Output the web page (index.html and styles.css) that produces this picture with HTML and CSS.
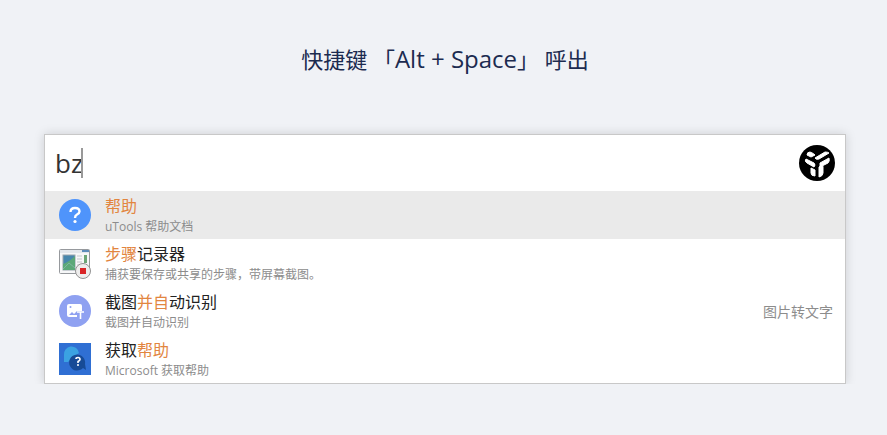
FILE: index.html
```html
<!DOCTYPE html>
<html lang="zh-CN">
<head>
    <meta charset="UTF-8">
    <title>uTools</title>
    <link rel="stylesheet" href="styles.css">
</head>
<body>
<h1 class="title">快捷键 「<span class="key">Alt + Space</span>」 呼出</h1>
<div class="box">
    <div class="search">
        <input class="keyword" type="text" value="bz" aria-label="搜索" autocomplete="off" spellcheck="false">
        <span class="cursor"></span>
        <button class="logo" type="button" aria-label="uTools">
            <svg width="36" height="36" viewBox="0 0 36 36">
                <circle cx="18" cy="18" r="18" fill="#000"/>
                <g fill="#fff" stroke="#fff" stroke-width="1" stroke-linejoin="round">
                    <path d="M8 10Q8 7 11 7Q14 8 16 10L12 12Z"/>
                    <path d="M16 13L26 7Q29 7 30 8L20 14Q17 15 16 13Z"/>
                    <path d="M7 14L15 18Q17 20 15 22L8 18Q5 16 7 14Z"/>
                    <path d="M21 18L30 13Q31 16 29 18L21 22Z"/>
                    <path d="M12 23L16 25V31Q12 31 12 28Z"/>
                    <path d="M20 22Q24 19 24 22V28Q24 31 20 32Z"/>
                </g>
            </svg>
        </button>
    </div>
    <ul class="list">
        <li>
            <a class="item current" href="#">
                <svg class="icon" viewBox="0 0 32 32">
                    <circle cx="16" cy="16" r="16" fill="#4f94fb"/>
                    <path d="M11.5 13Q11.5 9 16 9Q20.5 9 20.5 12.5Q20.5 14 18 15.5Q16 16.5 16 19" fill="none" stroke="#fff" stroke-width="2.4"/>
                    <circle cx="16" cy="22.5" r="1.6" fill="#fff"/>
                </svg>
                <div class="text">
                    <p class="name"><em>帮助</em></p>
                    <p class="desc">uTools 帮助文档</p>
                </div>
            </a>
        </li>
        <li>
            <a class="item" href="#">
                <svg class="icon" viewBox="0 0 32 32">
                    <rect x="0.5" y="2.5" width="30" height="24" rx="1" fill="#f6f7f8" stroke="#96999d"/>
                    <path d="M1 3H30V6H1Z" fill="#e3e7ec"/>
                    <path d="M23 3H30V5H23Z" fill="#5d8cba"/>
                    <rect x="4" y="8" width="12" height="15" fill="#4787ad" stroke="#9aa6ad"/>
                    <path d="M4 17Q10 15 16 9V23H4Z" fill="#5ba878"/>
                    <path d="M4 22L10 16L16 21" fill="none" stroke="#7db6a0"/>
                    <path d="M18 9H23M18 12H23M18 15H23M18 18H21" stroke="#c3c6cb"/>
                    <rect x="25" y="8" width="3" height="8" fill="#6ca676"/>
                    <circle cx="24" cy="24" r="7.5" fill="#eeeded" stroke="#929292"/>
                    <rect x="21" y="21" width="6" height="6" fill="#d92426"/>
                </svg>
                <div class="text">
                    <p class="name"><em>步骤</em>记录器</p>
                    <p class="desc">捕获要保存或共享的步骤，带屏幕截图。</p>
                </div>
            </a>
        </li>
        <li>
            <a class="item" href="#">
                <svg class="icon" viewBox="0 0 32 32">
                    <circle cx="16" cy="16" r="16" fill="#8fa1f1"/>
                    <path d="M10 9H21Q23 9 23 11V16H18V22H10Q8 22 8 20V11Q8 9 10 9Z" fill="#fff"/>
                    <circle cx="11.5" cy="12" r="1" fill="#8fa1f1"/>
                    <path d="M10 20L13 17L15 19L18 16L20 18V20Z" fill="#8fa1f1"/>
                    <path d="M18 17H25M21.5 17V24" stroke="#fff" stroke-width="1.6"/>
                </svg>
                <div class="text">
                    <p class="name">截图<em>并自</em>动识别</p>
                    <p class="desc">截图并自动识别</p>
                </div>
                <span class="tag">图片转文字</span>
            </a>
        </li>
        <li>
            <a class="item" href="#">
                <svg class="icon" viewBox="0 0 32 32">
                    <rect width="32" height="32" fill="#2f6fd3"/>
                    <path d="M5 19V12A7.5 7.5 0 0 1 20 10L12 16L9 19Z" fill="#3ba2e2"/>
                    <path d="M27 27L24 25A8 8 0 1 1 26 21Z" fill="#174b96"/>
                    <path d="M17 16Q17 14.5 19 14.5Q21 14.5 21 16.5Q21 17.5 19 18.5V20" fill="none" stroke="#fff" stroke-width="1.6"/>
                    <circle cx="19" cy="22" r="1" fill="#fff"/>
                </svg>
                <div class="text">
                    <p class="name">获取<em>帮助</em></p>
                    <p class="desc">Microsoft 获取帮助</p>
                </div>
            </a>
        </li>
    </ul>
</div>
</body>
</html>
```
FILE: styles.css
```css
* {
    padding: 0;
    margin: 0;
    list-style: none;
    box-sizing: border-box;
}

body {
    padding: 43px 41px 0 44px;
    background: #f0f2f6;
    font-family: "Open Sans", "Noto Sans CJK SC", sans-serif;
}

.title {
    height: 32px;
    line-height: 32px;
    text-align: center;
    font-size: 22px;
    font-weight: normal;
    color: #1c2b50;
}

.title .key {
    font-size: 24px;
}

.box {
    margin-top: 59px;
    border: 1px solid #c8c8c8;
    background: #fff;
    box-shadow: 0 0 10px rgba(0, 0, 0, 0.15);
}

.search {
    position: relative;
    display: flex;
    align-items: center;
    height: 56px;
    padding: 0 10px;
}

.keyword {
    flex: 1;
    min-width: 0;
    height: 40px;
    border: 0;
    outline: none;
    background: none;
    font-family: inherit;
    font-size: 26px;
    color: #333;
}

/* 输入光标 */
.cursor {
    position: absolute;
    left: 36px;
    top: 13px;
    width: 2px;
    height: 30px;
    background: #999;
}

.logo {
    width: 36px;
    height: 36px;
    border: 0;
    background: none;
    cursor: pointer;
}

.logo svg {
    display: block;
}

.item {
    display: flex;
    align-items: center;
    height: 48px;
    padding: 0 12px 0 14px;
    text-decoration: none;
    color: #222;
}

.item.current {
    background: #eaeaea;
}

.icon {
    flex: none;
    width: 32px;
    height: 32px;
    margin-right: 14px;
}

.text {
    flex: 1;
    min-width: 0;
}

.name {
    line-height: 24px;
    font-size: 16px;
}

.name em {
    font-style: normal;
    color: #e2853f;
}

.desc {
    line-height: 18px;
    font-size: 12px;
    color: #8c8c8c;
}

.tag {
    font-size: 14px;
    color: #8c8c8c;
}
```
